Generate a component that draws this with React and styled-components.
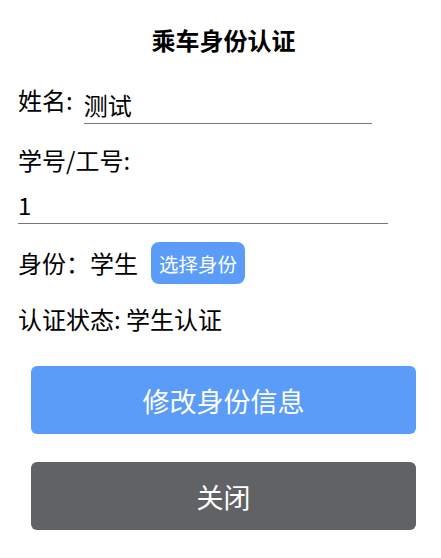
import React from 'react'
import styled, {createGlobalStyle} from 'styled-components'

const GlobalStyle = createGlobalStyle`
    body {
        margin: 0;
        background: #ffffff;
        font-family: "Noto Sans CJK SC", "Noto Sans", sans-serif;
        color: #000;
    }
`

const Page = styled.div`
    display: flex;
    flex-direction: column;
    padding: 28px 12px 0 18px;
`

const Title = styled.h1`
    margin: 0;
    font-size: 24px;
    line-height: 24px;
    font-weight: bold;
    text-align: center;
`

const NameRow = styled.div`
    display: flex;
    align-items: flex-start;
    margin-top: 36px;
`

const Label = styled.span`
    font-size: 24px;
    line-height: 24px;
    white-space: nowrap;
`

const BlockLabel = styled(Label)`
    display: block;
    margin-top: 24px;
`

const Input = styled.input`
    box-sizing: border-box;
    width: ${p => p.$width}px;
    height: 32px;
    margin: ${p => p.$margin};
    padding: 0 0 6px 0;
    border: none;
    border-bottom: 1px solid #767676;
    outline: none;
    background: transparent;
    font-family: inherit;
    font-size: 24px;
    color: #000;
`

const IdentityRow = styled.div`
    display: flex;
    align-items: center;
    gap: 13px;
    margin-top: 18px;
`

const SmallButton = styled.button`
    box-sizing: border-box;
    width: 94px;
    height: 42px;
    padding: 0;
    border: none;
    border-radius: 8px;
    background: #5a9cf8;
    color: #fff;
    font-family: inherit;
    font-size: 19.5px;
`

const Status = styled(Label)`
    display: block;
    margin-top: 23px;
`

const Actions = styled.div`
    display: flex;
    flex-direction: column;
    gap: 28px;
    margin: 35px 13px 0 13px;
`

const BigButton = styled.button`
    height: 68px;
    padding: 0;
    border: none;
    border-radius: 6px;
    background: ${p => p.$gray ? '#616266' : '#5a9cf8'};
    color: #fff;
    font-family: inherit;
    font-size: 27px;
`

export default function App() {
    return (
        <Page>
            <GlobalStyle />
            <Title>乘车身份认证</Title>
            <NameRow>
                <Label>姓名:</Label>
                <Input $width={288} $margin="4px 0 0 11px" defaultValue="测试" />
            </NameRow>
            <BlockLabel>学号/工号:</BlockLabel>
            <Input $width={370} $margin="20px 0 0 0" defaultValue="1" />
            <IdentityRow>
                <Label>身份：学生</Label>
                <SmallButton>选择身份</SmallButton>
            </IdentityRow>
            <Status>认证状态: 学生认证</Status>
            <Actions>
                <BigButton>修改身份信息</BigButton>
                <BigButton $gray>关闭</BigButton>
            </Actions>
        </Page>
    )
}
